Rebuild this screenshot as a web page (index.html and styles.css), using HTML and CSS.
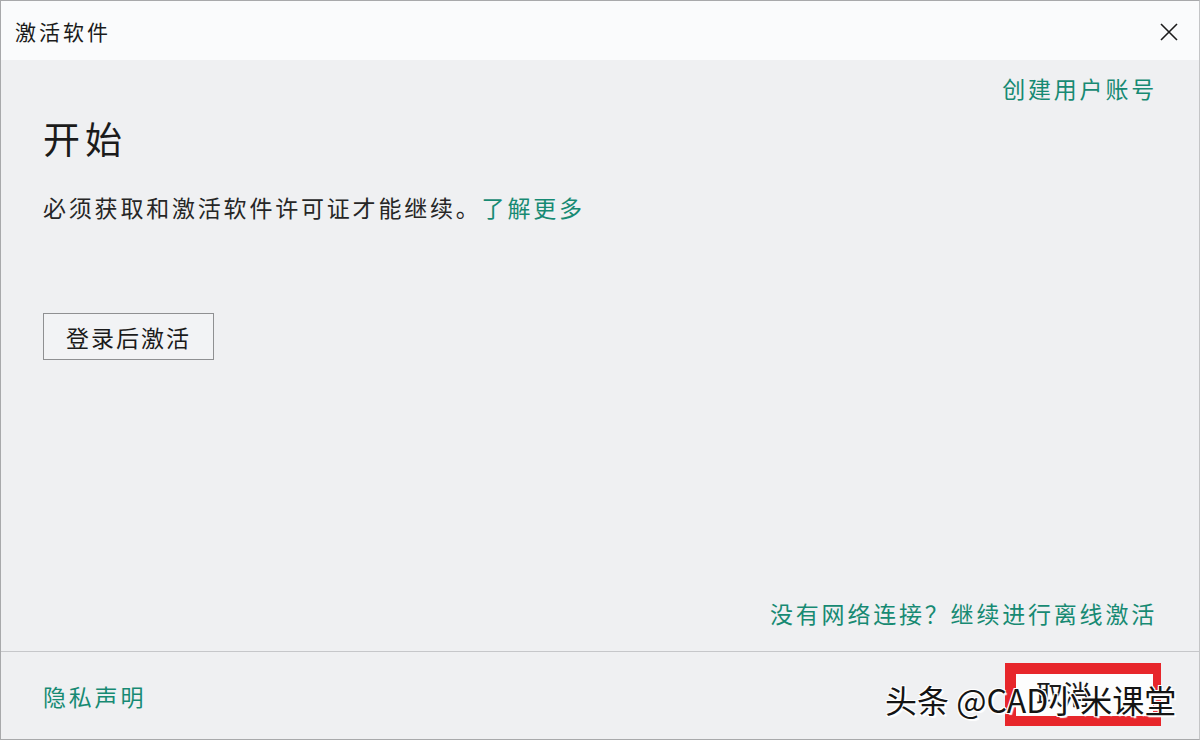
FILE: index.html
```html
<!DOCTYPE html>
<html lang="zh-CN">
<head>
  <meta charset="UTF-8">
  <title>激活软件</title>
  <link rel="stylesheet" href="styles.css">
</head>
<body>

<div class="window">
  <header class="titlebar">
    <span class="title">激活软件</span>
    <svg class="close" width="20" height="20" viewBox="0 0 20 20">
      <path d="M2 2 L18 18 M18 2 L2 18" stroke="#1b1b1b" stroke-width="1.6" fill="none"/>
    </svg>
  </header>

  <main class="content">
    <a class="link create-link">创建用户账号</a>
    <h1>开始</h1>
    <p class="intro">必须获取和激活软件许可证才能继续。<a class="link">了解更多</a></p>
    <button class="signin">登录后激活</button>
    <a class="link offline">没有网络连接？继续进行离线激活</a>
  </main>

  <footer class="footer">
    <a class="link">隐私声明</a>
    <div class="highlight">
      <button class="cancel">取消</button>
    </div>
  </footer>

  <!-- watermark over the screenshot -->
  <div class="watermark">头条 @CAD小米课堂</div>
</div>

</body>
</html>
```

FILE: styles.css
```css
* {
  box-sizing: border-box;
}
body {
  margin: 0;
  padding: 0;
  font-family: "Noto Sans CJK SC", "Noto Sans", sans-serif;
  background: #eff0f2;
}
.window {
  position: relative;
  width: 1200px;
  height: 740px;
  border: 1px solid #a8a9ab;
  border-right-color: #c4c5c7;
  background: #eff0f2;
  display: flex;
  flex-direction: column;
  overflow: hidden;
}

/* title bar */
.titlebar {
  height: 59px;
  background: #fafbfc;
  display: flex;
  align-items: center;
  justify-content: space-between;
  padding: 0 20px 0 14px;
}
.title {
  font-size: 21px;
  letter-spacing: 3px;
  color: #1b1b1b;
  line-height: 30px;
}
.close {
  margin-top: 2px;
}

/* body */
.content {
  flex: 1;
  display: flex;
  flex-direction: column;
  align-items: flex-start;
  padding: 0 42px 0 42px;
}
.link {
  color: #178a73;
  font-size: 23px;
  letter-spacing: 2.8px;
  line-height: 32px;
  cursor: pointer;
}
.create-link {
  align-self: flex-end;
  margin-top: 12px;
}
h1 {
  margin: 9px 0 0;
  font-size: 37px;
  font-weight: normal;
  letter-spacing: 5px;
  line-height: 50px;
  color: #1b1b1b;
}
.intro {
  margin: 28px 0 0;
  font-size: 23px;
  letter-spacing: 2.8px;
  line-height: 32px;
  color: #262626;
}
.signin {
  margin-top: 90px;
  height: 47px;
  padding: 0 22px;
  font-family: inherit;
  font-size: 23px;
  letter-spacing: 2px;
  color: #1b1b1b;
  background: #f2f3f5;
  border: 1px solid #8f9092;
  border-radius: 0;
}
.offline {
  align-self: flex-end;
  margin-top: auto;
  margin-bottom: 22px;
}

/* footer */
.footer {
  height: 88px;
  border-top: 1px solid #c6c7ca;
  display: flex;
  align-items: center;
  justify-content: space-between;
  padding: 0 38px 0 42px;
}
.highlight {
  width: 156px;
  height: 63px;
  border: 11px solid #e7262b;
  border-right-width: 8px;
  border-bottom-width: 10px;
  margin-top: -2px;
  background: #fdfdfd;
}
.cancel {
  width: 100%;
  height: 100%;
  border: none;
  background: transparent;
  text-align: left;
  padding: 0 0 12px 20px;
  font-family: inherit;
  font-size: 27px;
  color: #1b1b1b;
}

.watermark {
  position: absolute;
  left: 884px;
  top: 677px;
  font-size: 32px;
  line-height: 42px;
  color: #141414;
  white-space: nowrap;
  text-shadow: 1px 1px 0 #fff, -1px -1px 0 #fff, 1px -1px 0 #fff, -1px 1px 0 #fff, 2px 2px 1px #fff;
}
```
